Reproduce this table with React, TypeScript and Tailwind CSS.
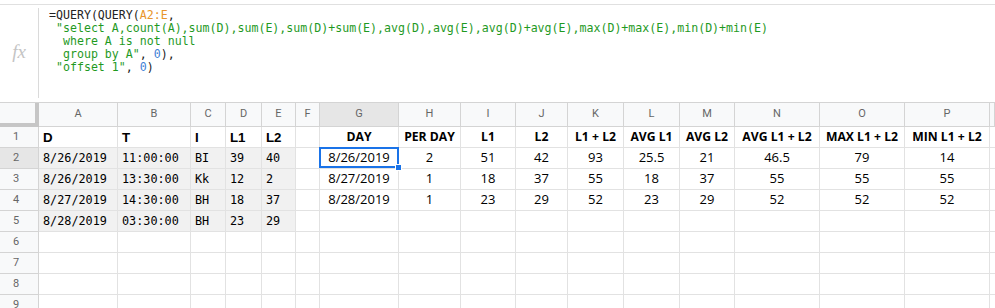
import React from 'react';

const COLS = ['A', 'B', 'C', 'D', 'E', 'F', 'G', 'H', 'I', 'J', 'K', 'L', 'M', 'N', 'O', 'P', ''];

const leftRows: string[][] = [
  ['D', 'T', 'I', 'L1', 'L2'],
  ['8/26/2019', '11:00:00', 'BI', '39', '40'],
  ['8/26/2019', '13:30:00', 'Kk', '12', '2'],
  ['8/27/2019', '14:30:00', 'BH', '18', '37'],
  ['8/28/2019', '03:30:00', 'BH', '23', '29'],
];

const rightRows: string[][] = [
  ['DAY', 'PER DAY', 'L1', 'L2', 'L1 + L2', 'AVG L1', 'AVG L2', 'AVG L1 + L2', 'MAX L1 + L2', 'MIN L1 + L2'],
  ['8/26/2019', '2', '51', '42', '93', '25.5', '21', '46.5', '79', '14'],
  ['8/27/2019', '1', '18', '37', '55', '18', '37', '55', '55', '55'],
  ['8/28/2019', '1', '23', '29', '52', '23', '29', '52', '52', '52'],
];

const mono = { fontFamily: '"DejaVu Sans Mono", "Liberation Mono", monospace' };

const FormulaBar: React.FC = () => (
  <div className="h-[102px] pt-[4px]">
    <div className="h-[98px] border-t border-[#e0e0e0] flex">
      {/* fx label */}
      <div className="w-[38px] flex items-center justify-center">
        <span className="italic text-[19px] text-[#c4c4c4] pb-[2px]" style={{ fontFamily: '"Liberation Serif", serif' }}>
          fx
        </span>
      </div>
      <div className="w-px h-[90px] mt-[3px] bg-[#dadada]" />
      <div className="pl-[10px] pt-[4px] text-[11.6px] leading-[13px] text-[#222] whitespace-pre" style={mono}>
        <div className="h-[13px]">
          {'=QUERY(QUERY('}
          <span className="text-[#e8952b]">A2:E</span>
          {','}
        </div>
        <div className="h-[13px]">
          {' '}
          <span className="text-[#1f9a1f]">"select A,count(A),sum(D),sum(E),sum(D)+sum(E),avg(D),avg(E),avg(D)+avg(E),max(D)+max(E),min(D)+min(E)</span>
        </div>
        <div className="h-[13px]">
          {'  '}
          <span className="text-[#1f9a1f]">where A is not null</span>
        </div>
        <div className="h-[13px]">
          {'  '}
          <span className="text-[#1f9a1f]">group by A"</span>
          {', '}
          <span className="text-[#3f7fd6]">0</span>
          {'),'}
        </div>
        <div className="h-[13px]">
          {' '}
          <span className="text-[#1f9a1f]">"offset 1"</span>
          {', '}
          <span className="text-[#3f7fd6]">0</span>
          {')'}
        </div>
      </div>
    </div>
  </div>
);

const Sheet: React.FC = () => {
  const rows = Array.from({ length: 9 }, (_, i) => i + 1);
  return (
    <div className="grid grid-cols-[39px_79px_73px_35px_36px_34px_24px_79px_62px_55px_52px_56px_56px_55px_85px_85px_85px_5px] border-t border-[#d4d4d4]">
      {/* column headers */}
      <div className="h-[24px] bg-[#f8f9fa] border-r-4 border-b-4 border-[#c6c6c6]" />
      {COLS.map((c, i) => (
        <div
          key={c + i}
          className={`h-[24px] border-r border-b border-[#d4d4d4] flex items-center justify-center text-[11px] text-[#666] ${
            c === 'G' ? 'bg-[#e6e6e6]' : 'bg-[#f8f9fa]'
          }`}
          style={{ fontFamily: 'Roboto, "Liberation Sans", sans-serif' }}
        >
          {c}
        </div>
      ))}

      {rows.map((r) => {
        const left = leftRows[r - 1];
        const right = rightRows[r - 1];
        return (
          <React.Fragment key={r}>
            <div
              className={`h-[21px] border-r border-b border-[#d4d4d4] flex items-center justify-center pr-[6px] text-[11px] text-[#666] overflow-hidden ${
                r === 2 ? 'bg-[#e6e6e6]' : 'bg-[#f8f9fa]'
              }`}
              style={{ fontFamily: 'Roboto, "Liberation Sans", sans-serif' }}
            >
              {r}
            </div>
            {/* A..E */}
            {[0, 1, 2, 3, 4].map((ci) => {
              const v = left ? left[ci] : '';
              const isHead = r === 1;
              const shaded = r >= 2 && r <= 5;
              return (
                <div
                  key={ci}
                  className={`h-[21px] border-r border-b border-[#e2e2e2] flex items-center pl-[4px] pt-[1px] whitespace-nowrap overflow-hidden text-black ${
                    shaded ? 'bg-[#f1f1f1]' : ''
                  } ${isHead ? 'font-bold text-[13.3px]' : 'text-[11.8px]'}`}
                  style={isHead ? { fontFamily: '"Liberation Sans", Arial, sans-serif' } : mono}
                >
                  {v}
                </div>
              );
            })}
            {/* F */}
            <div className="h-[21px] border-r border-b border-[#e2e2e2]" />
            {/* G..P */}
            {Array.from({ length: 10 }, (_, ci) => {
              const v = right ? right[ci] : '';
              const isHead = r === 1;
              const selected = r === 2 && ci === 0;
              return (
                <div
                  key={'g' + ci}
                  className={`relative h-[21px] border-r border-b border-[#e2e2e2] flex items-center justify-center whitespace-nowrap text-black ${
                    isHead ? 'font-bold text-[12.2px]' : 'text-[13px]'
                  }`}
                  style={{ fontFamily: '"Open Sans", "Noto Sans", sans-serif' }}
                >
                  {v}
                  {selected && (
                    <>
                      <div className="absolute -left-px -top-px -right-px bottom-0 border-2 border-[#1a73e8] z-10" />
                      <div className="absolute -right-[4px] -bottom-[3px] w-[7px] h-[7px] bg-[#1a73e8] border border-white z-20" />
                    </>
                  )}
                </div>
              );
            })}
            <div className="h-[21px] border-b border-[#e2e2e2]" />
          </React.Fragment>
        );
      })}
    </div>
  );
};

export default function App() {
  return (
    <div className="w-[995px] h-[308px] overflow-hidden bg-white">
      <FormulaBar />
      <Sheet />
    </div>
  );
}
